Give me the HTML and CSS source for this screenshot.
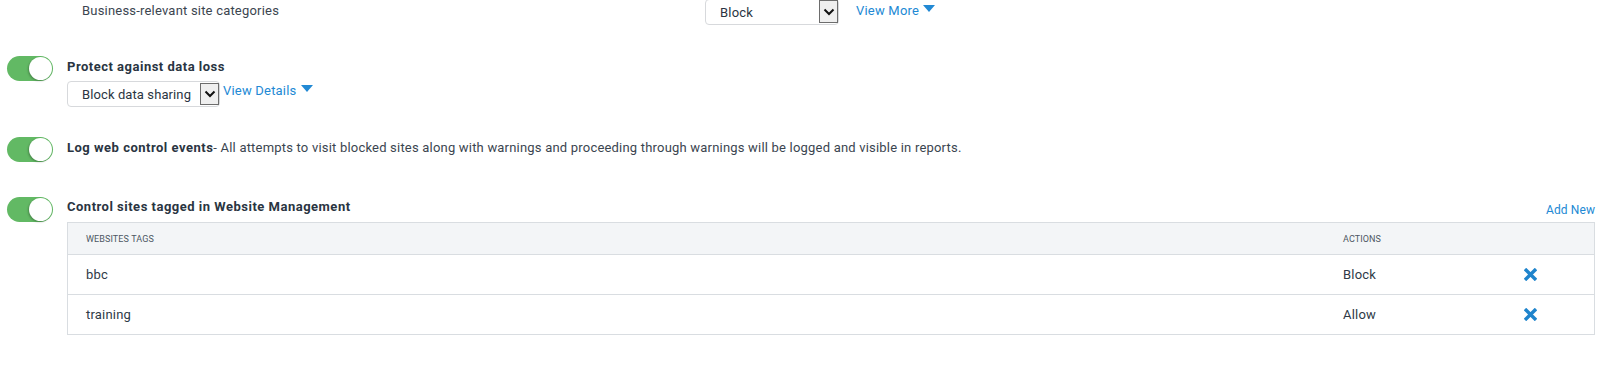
FILE: index.html
```html
<!DOCTYPE html>
<html>
<head>
<meta charset="utf-8">
<link rel="stylesheet" href="styles.css">
</head>
<body>
<div class="page">
  <div class="cat-row">
    <div class="cat-label">Business-relevant site categories</div>
    <div class="select select-top">
      <span class="select-text">Block</span>
      <span class="select-arrow"><svg width="12" height="8" viewBox="0 0 12 8"><polyline points="1.5,1.5 6,6 10.5,1.5" fill="none" stroke="#111" stroke-width="2"/></svg></span>
    </div>
    <a class="link">View More<span class="caret"></span></a>
  </div>

  <div class="section s1">
    <div class="toggle"><span class="knob"></span></div>
    <div class="content">
      <div class="title"><b>Protect against data loss</b></div>
      <div class="inline">
        <div class="select select-dlp">
          <span class="select-text">Block data sharing</span>
          <span class="select-arrow"><svg width="12" height="8" viewBox="0 0 12 8"><polyline points="1.5,1.5 6,6 10.5,1.5" fill="none" stroke="#111" stroke-width="2"/></svg></span>
        </div>
        <a class="link">View Details<span class="caret"></span></a>
      </div>
    </div>
  </div>

  <div class="section s2">
    <div class="toggle"><span class="knob"></span></div>
    <div class="content">
      <div class="title"><b>Log web control events</b>- All attempts to visit blocked sites along with warnings and proceeding through warnings will be logged and visible in reports.</div>
    </div>
  </div>

  <div class="section s3">
    <div class="toggle"><span class="knob"></span></div>
    <div class="content">
      <div class="title-bar">
        <div class="title short"><b>Control sites tagged in Website Management</b></div>
        <a class="link add">Add New</a>
      </div>
      <div class="table">
        <div class="tr th">
          <div class="td">WEBSITES TAGS</div>
          <div class="td">ACTIONS</div>
          <div class="td"></div>
        </div>
        <div class="tr">
          <div class="td">bbc</div>
          <div class="td">Block</div>
          <div class="td"><svg class="x" width="13" height="13" viewBox="0 0 13 13"><path d="M2.2 2.2 L10.8 10.8 M10.8 2.2 L2.2 10.8" stroke="#1f84cc" stroke-width="3.4" stroke-linecap="square"/></svg></div>
        </div>
        <div class="tr">
          <div class="td">training</div>
          <div class="td">Allow</div>
          <div class="td"><svg class="x" width="13" height="13" viewBox="0 0 13 13"><path d="M2.2 2.2 L10.8 10.8 M10.8 2.2 L2.2 10.8" stroke="#1f84cc" stroke-width="3.4" stroke-linecap="square"/></svg></div>
        </div>
      </div>
    </div>
  </div>
</div>
</body>
</html>
```

FILE: styles.css
```css
html, body {
  margin: 0;
  padding: 0;
  background: #fff;
}
body {
  font-family: Roboto, "Liberation Sans", sans-serif;
  font-size: 13px;
  letter-spacing: 0.2px;
  color: #2e3a47;
  width: 1621px;
  height: 376px;
  overflow: hidden;
}
.page {
  padding: 0 26px 0 7px;
}
b {
  font-weight: 700;
  color: #2a3542;
  letter-spacing: 0.5px;
}
.link {
  color: #2289d4;
  cursor: pointer;
  white-space: nowrap;
}
.caret {
  display: inline-block;
  width: 0;
  height: 0;
  border-left: 6.5px solid transparent;
  border-right: 6.5px solid transparent;
  border-top: 7px solid #2289d4;
  margin-left: 4px;
  vertical-align: 3px;
}

/* top row */
.cat-row {
  display: flex;
  align-items: flex-start;
  margin-top: -1px;
  padding-left: 75px;
}
.cat-label {
  width: 623px;
  padding-top: 4px;
  color: #3b4550;
}
.cat-row .link {
  margin-left: 17px;
  padding-top: 4px;
}

/* select */
.select {
  display: flex;
  align-items: flex-start;
  justify-content: space-between;
  height: 24px;
  border: 1px solid #d7d9dc;
  border-radius: 4px;
  background: #fff;
  box-sizing: content-box;
}
.select-text {
  padding-left: 14px;
  line-height: 26px;
  color: #2a3542;
  white-space: nowrap;
}
.select-arrow {
  display: flex;
  align-items: center;
  justify-content: center;
  width: 17px;
  height: 20px;
  border: 1px solid #6d6d6d;
  background: #efefef;
  margin-top: 1px;
}
.select-top {
  width: 132px;
}
.select-top .select-arrow {
  height: 21px;
  margin-top: 0;
}
.select-dlp {
  width: 151px;
}
.select-dlp .select-text {
  padding-left: 14px;
  letter-spacing: 0.1px;
}

/* sections */
.section {
  display: flex;
  align-items: flex-start;
  gap: 14px;
}
.s1 { margin-top: 31px; }
.s2 { margin-top: 30px; }
.s3 { margin-top: 35px; }
.toggle {
  position: relative;
  flex: none;
  width: 46px;
  height: 25px;
  border-radius: 13px;
  background: #62b964;
}
.knob {
  position: absolute;
  right: 1px;
  top: 1px;
  width: 23px;
  height: 23px;
  border-radius: 50%;
  background: #fff;
  box-shadow: -1px 1px 2px rgba(0, 0, 0, 0.25);
}
.content {
  flex: 1;
  min-width: 0;
}
.title {
  height: 25px;
  line-height: 22px;
  white-space: nowrap;
  color: #3b4550;
}
.inline {
  display: flex;
  align-items: flex-start;
  gap: 3px;
}
.inline .link {
  padding-top: 2px;
}
.title-bar {
  display: flex;
  justify-content: space-between;
  align-items: flex-start;
}
.title.short {
  line-height: 20px;
}
.add {
  font-size: 12px;
  letter-spacing: 0.1px;
  padding-top: 3px;
  line-height: 20px;
}

/* table */
.table {
  border: 1px solid #d9dde1;
}
.tr {
  display: grid;
  grid-template-columns: 1257px 181px 1fr;
  align-items: center;
  height: 39px;
  border-top: 1px solid #d9dde1;
}
.tr.th {
  height: 31px;
  border-top: 0;
  background: #f3f5f7;
}
.td {
  padding-left: 18px;
  white-space: nowrap;
}
.th .td {
  font-size: 9px;
  color: #4d5763;
  letter-spacing: 0.1px;
}
.x {
  display: block;
  margin-left: 0;
}
```
